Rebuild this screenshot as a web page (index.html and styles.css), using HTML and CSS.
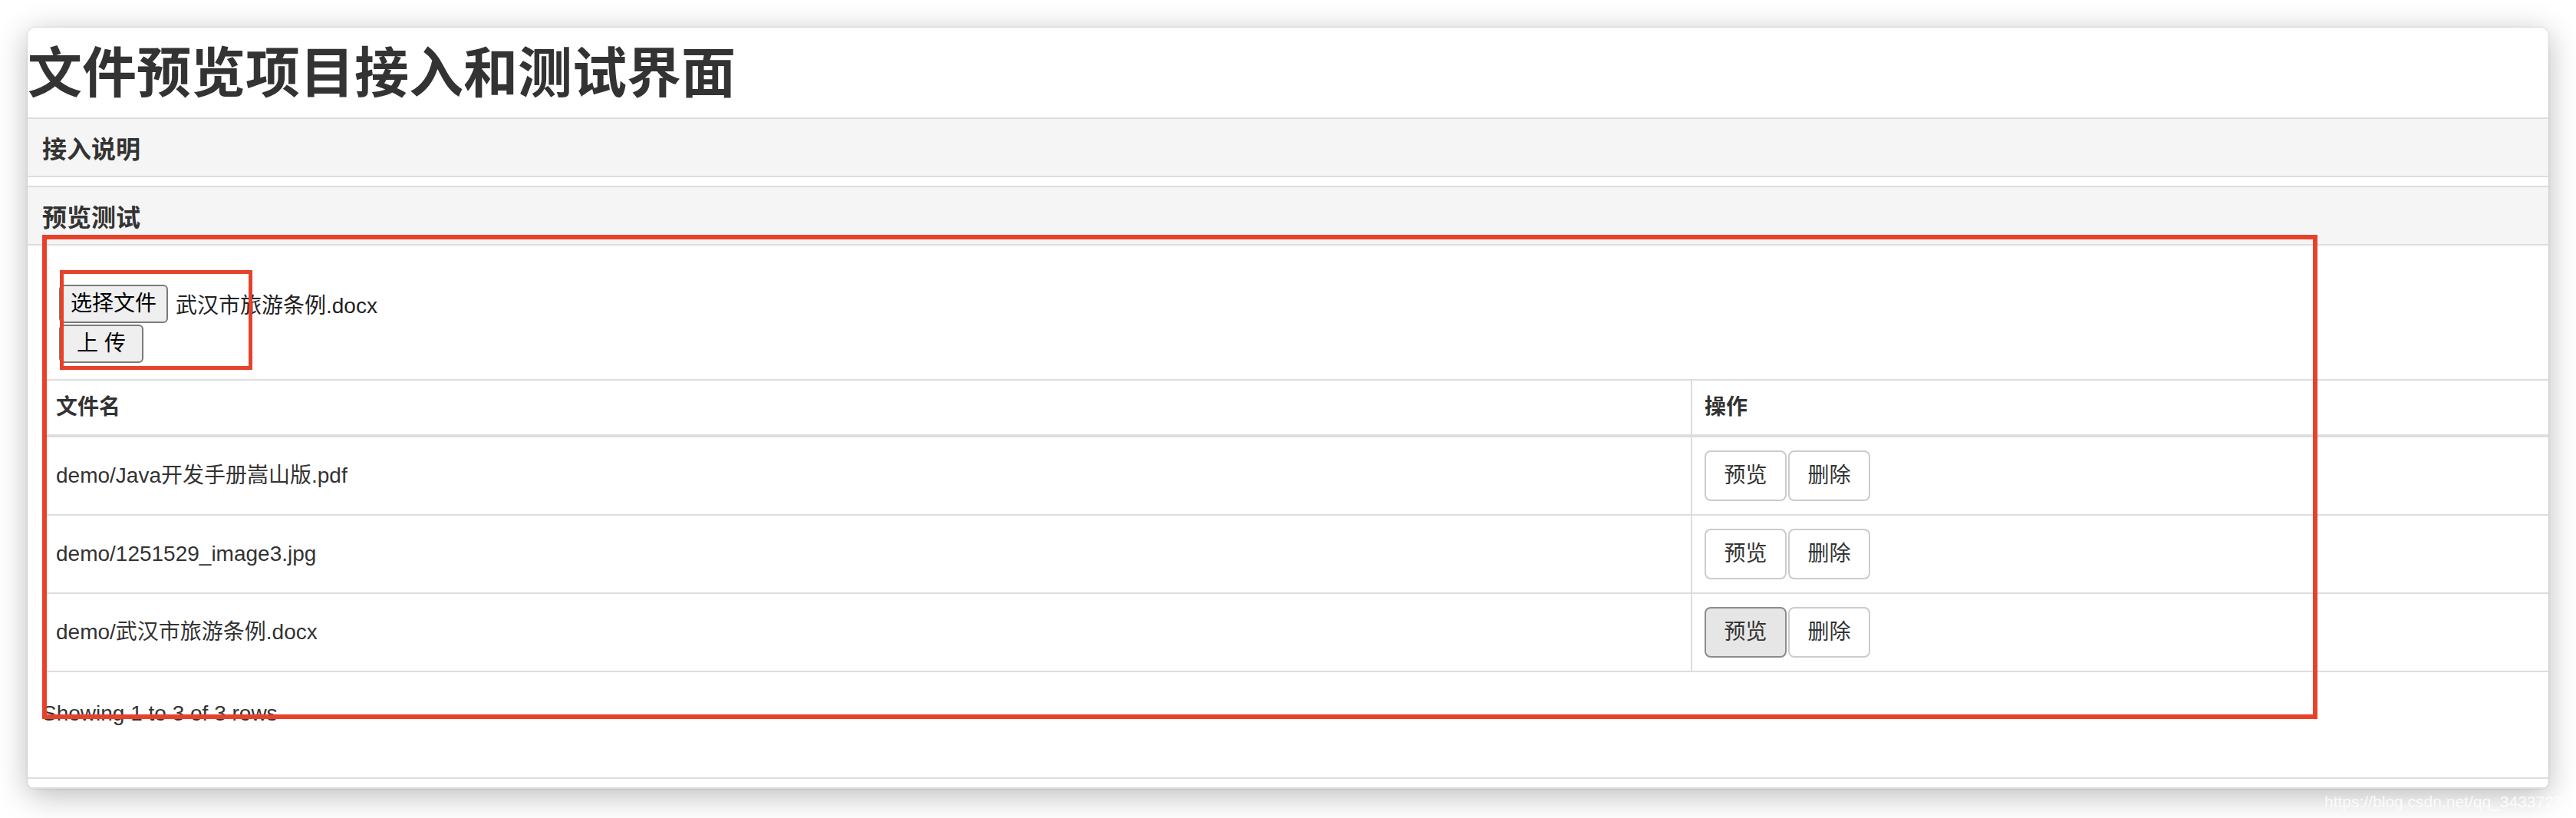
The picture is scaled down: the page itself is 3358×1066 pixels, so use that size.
FILE: index.html
```html
<!DOCTYPE html>
<html lang="zh-CN">
<head>
<meta charset="utf-8">
<title>文件预览项目接入和测试界面</title>
<link rel="stylesheet" href="styles.css">
</head>
<body>
<div class="window">
  <h1 class="title">文件预览项目接入和测试界面</h1>

  <div class="panel">
    <div class="panel-heading">接入说明</div>
  </div>

  <div class="panel panel-main">
    <div class="panel-heading">预览测试</div>
    <div class="panel-body">
      <form class="upload-form">
        <div class="file-row">
          <button type="button" class="sys-btn choose-btn">选择文件</button>
          <span class="file-name">武汉市旅游条例.docx</span>
        </div>
        <button type="button" class="sys-btn upload-btn">上 传</button>
      </form>

      <table class="file-table">
        <colgroup>
          <col class="col-name">
          <col>
        </colgroup>
        <thead>
          <tr>
            <th>文件名</th>
            <th class="col-ops">操作</th>
          </tr>
        </thead>
        <tbody>
          <tr>
            <td>demo/Java开发手册嵩山版.pdf</td>
            <td class="col-ops"><div class="ops"><button type="button" class="btn">预览</button><button type="button" class="btn">删除</button></div></td>
          </tr>
          <tr>
            <td>demo/1251529_image3.jpg</td>
            <td class="col-ops"><div class="ops"><button type="button" class="btn">预览</button><button type="button" class="btn">删除</button></div></td>
          </tr>
          <tr>
            <td>demo/武汉市旅游条例.docx</td>
            <td class="col-ops"><div class="ops"><button type="button" class="btn btn-active">预览</button><button type="button" class="btn">删除</button></div></td>
          </tr>
        </tbody>
      </table>

      <div class="pagination-detail">Showing 1 to 3 of 3 rows</div>
    </div>
  </div>

  <div class="panel panel-next"></div>

  <div class="mark mark-big"></div>
  <div class="mark mark-small"></div>
</div>
<div class="watermark">https://blog.csdn.net/qq_34337272</div>
</body>
</html>
```

FILE: styles.css
```css
* {
  box-sizing: border-box;
}

html, body {
  margin: 0;
  padding: 0;
}

body {
  width: 3358px;
  height: 1066px;
  overflow: hidden;
  background: #ffffff;
  position: relative;
  padding: 36px 36px 0 36px;
  font-family: "Liberation Sans", "Noto Sans CJK SC", sans-serif;
  color: #333333;
}

.window {
  position: relative;
  width: 3286px;
  height: 992px;
  background: #ffffff;
  border-radius: 10px;
  overflow: hidden;
  box-shadow: 0 8px 40px rgba(0, 0, 0, 0.28), 0 0 3px rgba(0, 0, 0, 0.15);
}

.title {
  margin: 0;
  height: 117px;
  padding-top: 20px;
  font-size: 71px;
  line-height: 80px;
  font-weight: bold;
  color: #333333;
  white-space: nowrap;
}

.panel {
  border-top: 2px solid #dddddd;
  border-bottom: 2px solid #dddddd;
  margin-bottom: 11px;
}

.panel-heading {
  height: 74px;
  padding: 23px 0 0 19px;
  background: #f5f5f5;
  font-size: 32px;
  line-height: 35px;
  font-weight: bold;
  color: #333333;
}

.panel-main .panel-heading {
  border-bottom: 2px solid #dddddd;
  height: 76px;
}

.panel-body {
  height: 693px;
  padding: 51px 0 0 19px;
}

.upload-form {
  margin-left: 22px;
  display: flex;
  flex-direction: column;
  align-items: flex-start;
  gap: 2px;
}

.file-row {
  display: flex;
  align-items: center;
  gap: 10px;
}

.sys-btn {
  height: 50px;
  margin: 0;
  border: 2px solid #7a7a7a;
  border-radius: 6px;
  background: #efefef;
  color: #000000;
  font-family: "Liberation Sans", "Noto Sans CJK SC", sans-serif;
  font-size: 28px;
  line-height: 1;
}

.choose-btn {
  width: 142px;
  padding: 0;
}

.upload-btn {
  width: 110px;
  padding: 0;
}

.file-name {
  font-size: 28px;
  color: #222222;
}

.file-table {
  margin-top: 21px;
  width: 3267px;
  border-collapse: separate;
  border-spacing: 0;
  border-top: 2px solid #dddddd;
  border-left: 2px solid #dddddd;
  font-size: 28px;
  color: #333333;
}

.col-name {
  width: 2147px;
}

.file-table th {
  text-align: left;
  font-weight: bold;
  padding: 16px;
  line-height: 38px;
  height: 74px;
  border-bottom: 4px solid #dddddd;
  vertical-align: middle;
}

.file-table td {
  padding: 17px 16px;
  height: 102px;
  line-height: 40px;
  border-bottom: 2px solid #dddddd;
  vertical-align: middle;
}

.file-table .col-ops {
  border-left: 2px solid #dddddd;
}

.ops {
  display: flex;
  gap: 2px;
}

.btn {
  width: 107px;
  height: 66px;
  margin: 0;
  padding: 0;
  border: 2px solid #cccccc;
  border-radius: 8px;
  background: #ffffff;
  color: #333333;
  font-family: "Liberation Sans", "Noto Sans CJK SC", sans-serif;
  font-size: 28px;
  line-height: 1;
}

.btn-active {
  background: #e6e6e6;
  border-color: #8c8c8c;
}

.pagination-detail {
  margin-top: 34px;
  font-size: 28px;
  line-height: 40px;
  color: #333333;
}

.panel-next {
  border-bottom: none;
  height: 20px;
}

.mark {
  position: absolute;
  border-style: solid;
  border-color: #e8412a;
  pointer-events: none;
}

.mark-big {
  left: 19px;
  top: 270px;
  width: 2966px;
  height: 631px;
  border-width: 6px;
}

.mark-small {
  left: 42px;
  top: 316px;
  width: 251px;
  height: 130px;
  border-width: 5px;
}

.watermark {
  position: absolute;
  left: 3030px;
  top: 1032px;
  font-size: 21px;
  line-height: 26px;
  color: rgba(255, 255, 255, 0.85);
  white-space: nowrap;
}
```
